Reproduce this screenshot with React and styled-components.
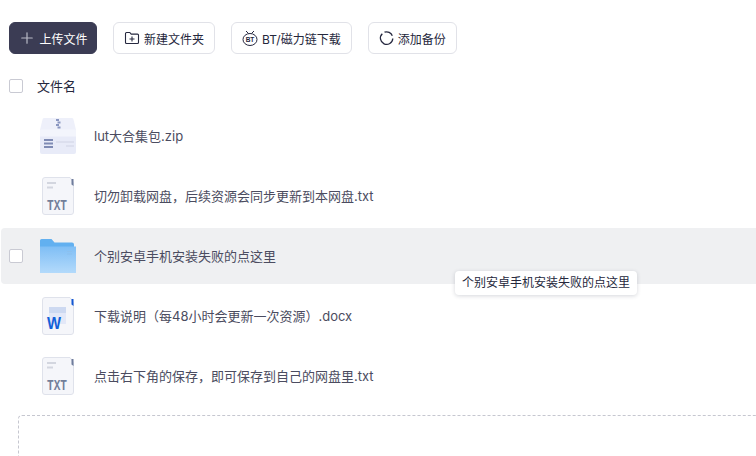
import styled, { createGlobalStyle } from 'styled-components'
import { Plus } from 'lucide-react'

const files = [
  { name: 'lut大合集包.zip', type: 'zip' },
  { name: '切勿卸载网盘，后续资源会同步更新到本网盘.txt', type: 'txt' },
  { name: '个别安卓手机安装失败的点这里', type: 'folder', active: true },
  { name: '下载说明（每48小时会更新一次资源）.docx', type: 'doc' },
  { name: '点击右下角的保存，即可保存到自己的网盘里.txt', type: 'txt' },
]

function ZipIcon() {
  return (
    <svg width="36" height="36" viewBox="0 0 36 36">
      <path d="M0 11v23a2 2 0 0 0 2 2h32a2 2 0 0 0 2-2V11z" fill="#e8ebf8" />
      <path d="M2.500 1.500A1.500 1.500 0 0 1 4 0h28a1.500 1.500 0 0 1 1.500 1.500L36 12H0z" fill="#eef0fa" />
      <path d="M0 11.500h36v7H0z" fill="#f3f5fc" />
      <path d="M16 1h3v2h-3zM17.500 3.500h3v2h-3zM16 6h3v2h-3zM17.500 8.500h3v2h-3z" fill="#8a96c0" />
      <path d="M4 21h9v2H4zM4 24.500h9v2H4zM4 28h9v2H4z" fill="#7f8bb4" />
      <path d="M16 23h18v2H16zM26 27h8v2h-8z" fill="#dcdfee" />
    </svg>
  )
}

function DocShell({ children, corner }) {
  return (
    <svg width="32" height="38" viewBox="0 0 32 38">
      <path d="M3 .5h25l3.500 5V35a2.500 2.500 0 0 1-2.500 2.500H3A2.500 2.500 0 0 1 .5 35V3A2.500 2.500 0 0 1 3 .5z" fill="#f5f6fa" stroke="#dfe2eb" />
      <path d="M29.500 2h2v7l-2-1.500z" fill={corner} />
      {children}
    </svg>
  )
}

function TxtIcon() {
  return (
    <DocShell corner="#6f7c9c">
      <path d="M5 5h9v2H5zM5 9.500h6v2H5z" fill="#d3d6df" />
      <text x="5" y="33" textLength="20" lengthAdjust="spacingAndGlyphs" fontFamily="'Liberation Mono', monospace" fontWeight="700" fontSize="15" fill="#737f9a">TXT</text>
    </DocShell>
  )
}

function WordIcon() {
  return (
    <DocShell corner="#1257d3">
      <path d="M7 10h17v17H7z" fill="#e3e8f8" />
      <path d="M7 10h17v6H7z" fill="#cdd9f1" />
      <text x="5" y="32" textLength="14" lengthAdjust="spacingAndGlyphs" fontFamily="'Liberation Sans', sans-serif" fontWeight="700" fontSize="17" fill="#1260d8">W</text>
    </DocShell>
  )
}

function FolderIcon() {
  return (
    <svg width="36" height="34" viewBox="0 0 36 34">
      <defs>
        <linearGradient id="folderFront" x1="0" y1="0" x2="0" y2="1">
          <stop offset="0" stopColor="#7fbef5" />
          <stop offset="1" stopColor="#b3dafb" />
        </linearGradient>
      </defs>
      <path d="M0 1.500A1.500 1.500 0 0 1 1.500 0h10l3 3.500h17.500a2 2 0 0 1 2 2V10H0z" fill="#62b0f0" />
      <path d="M0 7.500h36V34H0z" fill="url(#folderFront)" />
      <path d="M27 12h5v1h-5zM27 14.500h5v1h-5z" fill="#8cc0ee" />
    </svg>
  )
}

const icons = { zip: ZipIcon, txt: TxtIcon, doc: WordIcon, folder: FolderIcon }

function App() {
  return (
    <Page>
      <GlobalStyle />
      <Toolbar>
        <PrimaryButton>
          <Plus size={18} strokeWidth={1.6} color="#b9bac6" />
          上传文件
        </PrimaryButton>
        <ToolButton>
          <svg width="16" height="16" viewBox="0 0 16 16" fill="none" stroke="#26283f" strokeWidth="1.100">
            <path d="M1.500 3.500a1 1 0 0 1 1-1h3.300l1.400 1.600h6.300a1 1 0 0 1 1 1v7.400a1 1 0 0 1-1 1h-11a1 1 0 0 1-1-1z" />
            <path d="M8 6.500v5M5.500 9h5" />
          </svg>
          新建文件夹
        </ToolButton>
        <ToolButton>
          <svg width="16" height="18" viewBox="0 0 16 18" fill="none" stroke="#26283f" strokeWidth="1">
            <ellipse cx="8" cy="10.500" rx="7" ry="6" />
            <path d="M4 2l2.500 2.500M12 2L9.500 4.500" />
            <text x="8" y="13" textAnchor="middle" fontSize="6.500" fontWeight="700" fontFamily="'Liberation Sans', sans-serif" fill="#26283f" stroke="none">BT</text>
          </svg>
          BT/磁力链下载
        </ToolButton>
        <ToolButton>
          <svg width="15" height="16" viewBox="0 0 15 16" fill="none" stroke="#26283f" strokeWidth="1.300">
            <path d="M5.500 2.200a6 6 0 0 1 7.800 3.600" />
            <path d="M13.800 8.500a6.200 6.200 0 1 1-10.500-4.800" />
          </svg>
          添加备份
        </ToolButton>
      </Toolbar>
      <HeaderRow>
        <Check />
        <HeaderLabel>文件名</HeaderLabel>
      </HeaderRow>
      <FileList>
        {files.map((file) => {
          const Icon = icons[file.type]
          return (
            <FileRow key={file.name} $active={file.active}>
              <CheckSlot>{file.active && <Check />}</CheckSlot>
              <IconSlot>
                <Icon />
              </IconSlot>
              <FileName>{file.name}</FileName>
              {file.active && <Tooltip>{file.name}</Tooltip>}
            </FileRow>
          )
        })}
      </FileList>
      <DropZone />
    </Page>
  )
}

export default App

const GlobalStyle = createGlobalStyle`
  html, body {
    margin: 0;
    background: #fff;
    overflow: hidden;
  }
  body {
    font-family: 'Inter', 'Noto Sans CJK SC', sans-serif;
  }
`

const Page = styled.div`
  width: 756px;
  height: 456px;
  overflow: hidden;
  box-sizing: border-box;
  padding: 22px 0 0 1px;
`

const Toolbar = styled.div`
  display: flex;
  gap: 16px;
  padding-left: 8px;
  height: 32px;
`

const ToolButton = styled.div`
  display: flex;
  align-items: center;
  justify-content: center;
  gap: 4px;
  padding: 0 10px;
  box-sizing: border-box;
  border: 1px solid #e1e2e8;
  border-radius: 6px;
  font-size: 12px;
  color: #25273c;
  white-space: nowrap;
`

const PrimaryButton = styled(ToolButton)`
  width: 88px;
  padding: 0;
  gap: 3px;
  background: #3b3c54;
  border-color: #3b3c54;
  color: #fff;
`

const HeaderRow = styled.div`
  display: flex;
  align-items: center;
  height: 20px;
  margin-top: 22px;
  padding-left: 8px;
`

const Check = styled.span`
  display: block;
  width: 14px;
  height: 14px;
  box-sizing: border-box;
  border: 1px solid #c9cad3;
  border-radius: 2px;
  background: #fff;
`

const HeaderLabel = styled.span`
  margin: 0 0 2px 14px;
  font-size: 13px;
  color: #25273c;
`

const FileList = styled.div`
  display: flex;
  flex-direction: column;
  margin-top: 12px;
`

const FileRow = styled.div`
  position: relative;
  display: flex;
  align-items: center;
  height: 56px;
  margin-bottom: 4px;
  border-radius: 4px 0 0 4px;
  background: ${(props) => (props.$active ? '#eff0f2' : 'transparent')};
`

const CheckSlot = styled.div`
  width: 14px;
  margin-left: 8px;
`

const IconSlot = styled.div`
  display: flex;
  align-items: center;
  justify-content: center;
  width: 36px;
  margin-left: 17px;
`

const FileName = styled.span`
  margin: 0 0 1px 18px;
  font-size: 13px;
  color: #4b4c60;
  white-space: nowrap;
`

const Tooltip = styled.div`
  position: absolute;
  left: 454px;
  top: 43px;
  z-index: 1;
  height: 24px;
  line-height: 24px;
  padding: 0 7px;
  background: #fff;
  border-radius: 4px;
  box-shadow: 0 1px 4px rgba(30, 32, 60, 0.18);
  font-size: 12px;
  color: #25273c;
  white-space: nowrap;
`

const DropZone = styled.div`
  margin: 7px 0 0 17px;
  width: 800px;
  height: 120px;
  box-sizing: border-box;
  border: 1px dashed #c6c7d0;
  border-radius: 4px;
`
